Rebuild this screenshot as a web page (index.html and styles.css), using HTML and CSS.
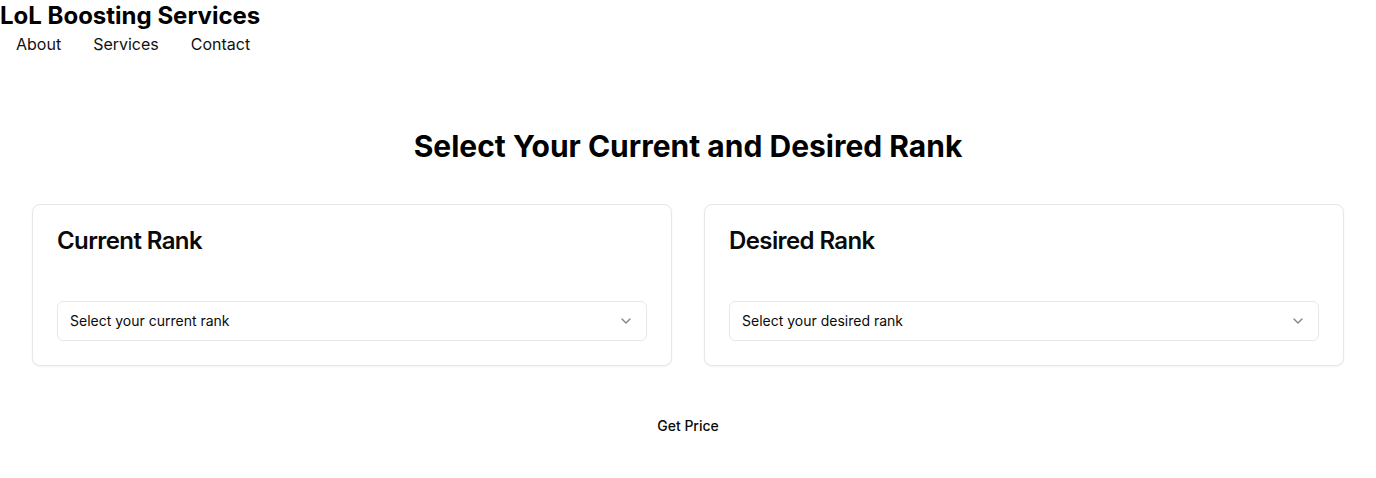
FILE: index.html
```html
<!DOCTYPE html>
<html lang="en">
<head>
<meta charset="utf-8">
<title>LoL Boosting Services</title>
<link rel="stylesheet" href="styles.css">
</head>
<body>
<header class="site-header">
  <h1 class="brand">LoL Boosting Services</h1>
  <nav class="nav">
    <a href="#" class="nav-link">About</a>
    <a href="#" class="nav-link">Services</a>
    <a href="#" class="nav-link">Contact</a>
  </nav>
</header>
<main class="main">
  <h2 class="page-title">Select Your Current and Desired Rank</h2>
  <div class="cards">
    <section class="card">
      <div class="card-header"><h3 class="card-title">Current Rank</h3></div>
      <div class="card-content">
        <div class="select" role="combobox" tabindex="0">
          <span class="select-value">Select your current rank</span>
          <svg class="chev" width="16" height="16" viewBox="0 0 24 24" fill="none" stroke="currentColor" stroke-width="2" stroke-linecap="round" stroke-linejoin="round"><path d="m6 9 6 6 6-6"/></svg>
        </div>
      </div>
    </section>
    <section class="card">
      <div class="card-header"><h3 class="card-title">Desired Rank</h3></div>
      <div class="card-content">
        <div class="select" role="combobox" tabindex="0">
          <span class="select-value">Select your desired rank</span>
          <svg class="chev" width="16" height="16" viewBox="0 0 24 24" fill="none" stroke="currentColor" stroke-width="2" stroke-linecap="round" stroke-linejoin="round"><path d="m6 9 6 6 6-6"/></svg>
        </div>
      </div>
    </section>
  </div>
  <div class="actions">
    <div class="btn" role="button" tabindex="0">Get Price</div>
  </div>
</main>
</body>
</html>
```

FILE: styles.css
```css
* { box-sizing: border-box; }
html, body { margin: 0; padding: 0; }
body {
  font-family: Inter, "Noto Sans", sans-serif;
  color: #0a0a0a;
  background: #fff;
}
.site-header { display: flex; flex-direction: column; }
.brand {
  margin: 0;
  font-size: 24px;
  line-height: 32px;
  font-weight: 700;
  color: #000;
}
.nav { display: flex; }
.nav-link {
  padding: 0 16px;
  font-size: 16px;
  line-height: 24px;
  color: #111;
  text-decoration: none;
}
.main { padding: 72px 32px 0; }
.page-title {
  margin: 0;
  text-align: center;
  font-size: 30px;
  line-height: 36px;
  font-weight: 700;
  color: #000;
}
.cards {
  margin-top: 40px;
  display: grid;
  grid-template-columns: 1fr 1fr;
  gap: 32px;
}
.card {
  border: 1px solid #e5e7eb;
  border-radius: 8px;
  background: #fff;
  box-shadow: 0 1px 2px rgba(0,0,0,0.05);
}
.card-header { padding: 24px; }
.card-title {
  margin: 0;
  font-size: 24px;
  line-height: 24px;
  font-weight: 600;
  letter-spacing: -0.6px;
}
.card-content { padding: 24px; }
.select {
  width: 100%;
  height: 40px;
  display: flex;
  align-items: center;
  justify-content: space-between;
  padding: 8px 12px;
  border: 1px solid #e5e7eb;
  border-radius: 6px;
  background: #fff;
  font-size: 14px;
  line-height: 20px;
  color: #0a0a0a;
}
.chev { color: #0a0a0a; opacity: 0.5; }
.actions { margin-top: 40px; display: flex; justify-content: center; }
.btn {
  height: 40px;
  padding: 8px 16px;
  display: flex;
  align-items: center;
  font-size: 14px;
  line-height: 20px;
  font-weight: 500;
  color: #0a0a0a;
}
```
